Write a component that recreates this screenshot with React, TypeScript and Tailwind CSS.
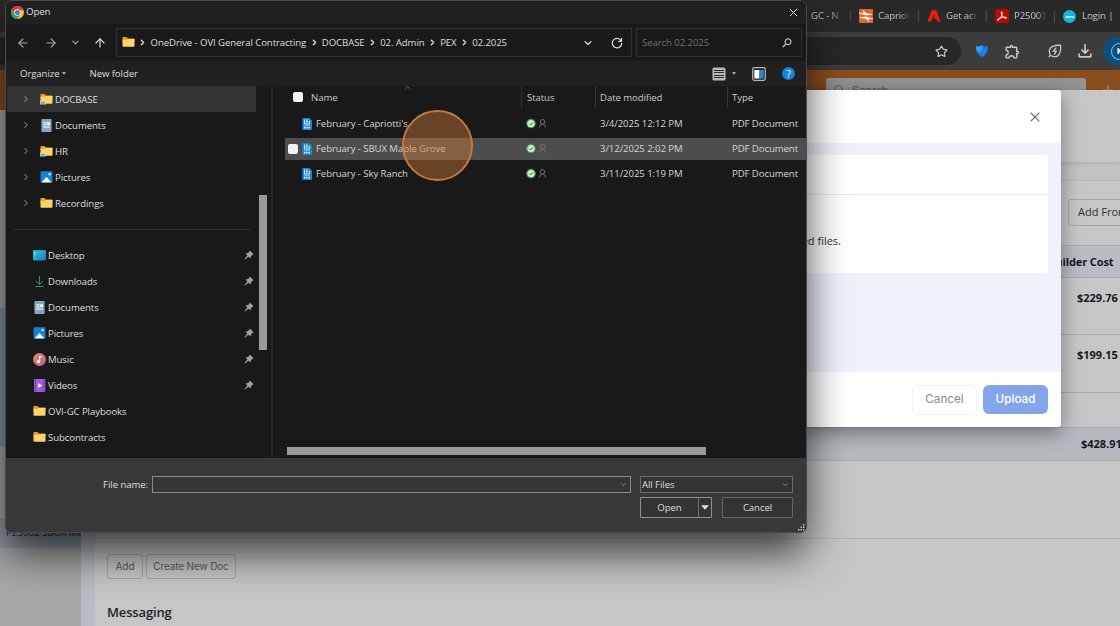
import React from "react";
import clsx from "clsx";
import {
  ArrowLeft,
  ArrowRight,
  ArrowUp,
  ChevronDown,
  ChevronRight,
  ChevronUp,
  Plus,
  Search,
  Star,
  X,
} from "lucide-react";
import { MdOutlineExtension, MdOutlineFileDownload } from "react-icons/md";

const ChromeLogo = () => (
  <svg viewBox="0 0 24 24" className="w-[13px] h-[13px]">
    <circle cx="12" cy="12" r="12" fill="#fbc116" />
    <path d="M12 12 1.6 6A12 12 0 0 1 22.4 6Z" fill="#e33b2e" />
    <path d="M12 6H22.4A12 12 0 0 0 1.6 6L6.8 15Z" fill="#e33b2e" />
    <path d="M6.8 15 1.6 6A12 12 0 0 0 12 24L17.2 15Z" fill="#2da94f" />
    <circle cx="12" cy="12" r="6" fill="#fff" />
    <circle cx="12" cy="12" r="4.7" fill="#3b7ded" />
  </svg>
);

const FolderIcon = ({ linked }: { linked?: boolean }) => (
  <svg viewBox="0 0 13 13" className="w-[13px] h-[13px] shrink-0">
    <path d="M.5 1.800c0-.5.3-.8.8-.8h3.2l1.3 1.400h5.9c.5 0 .8.3.8.8v2H.5Z" fill="#e8a317" />
    <path d="M.5 3.800h4.400l1.100-.9h6.500v7c0 .5-.3.8-.8.8H1.300c-.5 0-.8-.3-.8-.8Z" fill="#fcd566" />
    {linked && (
      <>
        <path d="M0 7.500h4l2 2v2H0Z" fill="#c3d9de" opacity=".9" />
        <path d="M.7 9.800h4.300M2 8.800v2M3.800 8.800v2" stroke="#4f8797" strokeWidth=".7" />
      </>
    )}
  </svg>
);

const DocumentsIcon = () => (
  <svg viewBox="0 0 13 13" className="w-[13px] h-[13px]">
    <rect x="1.4" y="0" width="10.2" height="13" rx="1" fill="#8ba3bd" />
    <path d="M3.2 3.8h3.4M3.2 5.8h3.4M3.2 8h6.6" stroke="#fff" strokeWidth="1" />
    <rect x="7.2" y="3.3" width="2.6" height="2.8" fill="#fff" />
  </svg>
);

const PicturesIcon = () => (
  <svg viewBox="0 0 13 13" className="w-[13px] h-[13px]">
    <rect x=".6" y=".2" width="11.8" height="11.8" rx="1.2" fill="#1684d3" />
    <path d="M1.800 11.300 6 6.600c.3-.4.8-.4 1.100 0l4.200 4.700Z" fill="#fff" />
    <circle cx="9.6" cy="3.2" r="1.1" fill="#fff" />
  </svg>
);

const DesktopIcon = () => (
  <svg viewBox="0 0 13 13" className="w-[13px] h-[13px]">
    <defs>
      <linearGradient id="desk" x1="0" y1="0" x2="1" y2="1">
        <stop offset="0" stopColor="#35d0d6" />
        <stop offset="1" stopColor="#1573c6" />
      </linearGradient>
    </defs>
    <rect x="0" y="1.2" width="13" height="10.2" rx="1" fill="url(#desk)" />
    <path d="M1.7 3v1M1.7 5v1" stroke="#c8f7fa" strokeWidth=".9" />
  </svg>
);

const DownloadsIcon = () => (
  <svg viewBox="0 0 13 13" className="w-[13px] h-[13px]" fill="none" stroke="#23936f" strokeWidth="1">
    <path d="M6.5.8v8.4M3 6l3.5 3.5L10 6M2.2 11.500h8.600" />
  </svg>
);

const MusicIcon = () => (
  <svg viewBox="0 0 13 13" className="w-[13px] h-[13px]">
    <defs>
      <linearGradient id="music" x1="0" y1="0" x2="1" y2="1">
        <stop offset="0" stopColor="#f08a50" />
        <stop offset="1" stopColor="#b55c9c" />
      </linearGradient>
    </defs>
    <circle cx="6.5" cy="6.5" r="6.5" fill="url(#music)" />
    <path d="M6.6 3.2v5.4M6.6 3.4 9 4.3" stroke="#fff" strokeWidth="1.1" />
    <circle cx="5.5" cy="8.6" r="1.6" fill="#fff" />
  </svg>
);

const VideosIcon = () => (
  <svg viewBox="0 0 13 13" className="w-[13px] h-[13px]">
    <rect x="1" y="0" width="11.4" height="13" rx="1" fill="#9a5de0" />
    <path d="M2.3 1v11M11.1 1v11" stroke="#4d2792" strokeWidth="1.2" strokeDasharray="1.3 1.2" />
    <path d="M5 4v5l4-2.5Z" fill="#fff" />
  </svg>
);

const PinIcon = () => (
  <svg viewBox="0 0 10 10" className="w-[10px] h-[10px]">
    <path d="M5.800.4 9.600 4.200 8.200 4.900 6.900 6.200l-.3 2.200L4.500 6.700 1 9.600l-.6-.4L3.300 5.500 1.600 3.400l2.300-.3L5.200 1.900Z" fill="#9aa4a9" />
  </svg>
);

const PdfFileIcon = () => (
  <svg viewBox="0 0 10 12" className="w-[10px] h-[12px]">
    <path d="M1.3 0h5.9L10 2.6V11a1 1 0 0 1-1 1H1.3a1 1 0 0 1-1-1V1a1 1 0 0 1 1-1Z" fill="#1a86d2" />
    <path d="M2.600 1.400v4.600h4.800V2.800M4.900 1v3M3.700 3.900h2.500" stroke="#fff" strokeWidth=".8" fill="none" />
    <path d="M2 7.300h6" stroke="#bfe0f7" strokeWidth=".6" />
    <path d="M2 9.600h1.500M4.200 9.600h1.500M6.500 9.600H8" stroke="#e6f4fd" strokeWidth="1.800" />
  </svg>
);

const StatusIcons = () => (
  <svg viewBox="0 0 22 12" className="w-[22px] h-[12px]" fill="none">
    <circle cx="5" cy="5.600" r="4.2" fill="#cfeed2" stroke="#3d9b50" strokeWidth="1.1" />
    <path d="m3.200 5.600 1.400 1.400 2.400-2.700" stroke="#2c6f3a" strokeWidth="1" />
    <circle cx="16.500" cy="3.800" r="2.300" stroke="#777" strokeWidth=".9" />
    <path d="M13.600 9.500c0-2.200 1.100-3.400 2.900-3.400s2.900 1.200 2.900 3.400" stroke="#777" strokeWidth=".9" />
  </svg>
);

const bookmarks = [
  {
    label: "Capriot",
    icon: (
      <svg viewBox="0 0 14 14" className="w-[14px] h-[14px] shrink-0">
        <rect width="14" height="14" rx="1" fill="#e0662b" />
        <path d="M0 4.200h5.200L4 1.500 7.500 4.600 13 5.300 7.500 6.200ZM14 9.800H8.800l1.200 2.700L6.500 9.400 1 8.700l5.500-.9Z" fill="#fff" stroke="#fff" strokeWidth=".5" />
      </svg>
    ),
  },
  {
    label: "Get acc",
    icon: (
      <svg viewBox="0 0 14 14" className="w-[14px] h-[14px] shrink-0">
        <path d="M4.800 1.200h4.400l4.400 11.400h-3.300L9.200 9.800H6.300l1.200-2.600L7 5.600 4 12.600H.4Z" fill="#ee1c0f" />
      </svg>
    ),
  },
  {
    label: "P25001",
    icon: (
      <svg viewBox="0 0 14 14" className="w-[14px] h-[14px] shrink-0">
        <rect width="14" height="14" rx="2.5" fill="#b10d07" />
        <path
          d="M6.8 2.8c-1 0-.5 2.4.6 4.2 1.2 1.8 3.9 3 4.1 1.9.2-1.2-4.2-.9-6.6.1-2 .9-3 2-2.2 2.3 1.1.4 3.2-3 4-5.1.5-1.5.7-3.4.1-3.400Z"
          fill="none"
          stroke="#fff"
          strokeWidth=".9"
        />
      </svg>
    ),
  },
];

const Bookmark = ({ icon, children }: { icon: React.ReactNode; children: React.ReactNode }) => (
  <div className="flex items-center w-[68px] shrink-0">
    <div className="w-px h-3 bg-[#4a4a4a] mr-2" />
    {icon}
    <span className="ml-[5px] whitespace-nowrap [mask-image:linear-gradient(90deg,#000_70%,transparent)]">{children}</span>
  </div>
);

const BrowserBars = () => (
  <div className="shrink-0">
    <div className="flex items-center h-8 pl-[811px] pt-px bg-[#292929] text-[9.700px] tracking-[-0.150px] text-[#c3c3c3]">
      <span className="w-[39px] shrink-0 whitespace-nowrap [mask-image:linear-gradient(90deg,#000_50%,transparent_80%)]">
        GC - N
      </span>
      {bookmarks.map((b) => (
        <Bookmark key={b.label} icon={b.icon}>
          {b.label}
        </Bookmark>
      ))}
      <div className="w-px h-3 bg-[#4a4a4a] mr-2" />
      <span className="flex items-center justify-center w-[13px] h-[13px] rounded-full bg-[#14b5dd] text-white text-[4px] font-bold">
        xero
      </span>
      <span className="ml-[6px] whitespace-nowrap">Login |</span>
    </div>
    <div className="flex items-center h-[38px] bg-[#3c3c3c] text-[#c9c9c9]">
      <div className="flex items-center justify-end w-[961px] h-7 rounded-r-full bg-[#272727] pr-[13px] shrink-0">
        <Star className="w-[13px] h-[13px]" strokeWidth={2.2} />
      </div>
      <svg viewBox="0 0 12 12" className="w-3 h-3 ml-[15px] shrink-0">
        <path d="M0 1.5C3 1.5 4.5 1 6 0c1.5 1 3 1.5 6 1.5C12 6.5 9.5 10 6 12 2.5 10 0 6.5 0 1.5Z" fill="#1482e6" />
        <path d="M0 1.5C3 1.5 4.5 1 6 0v6L1.3 7.5C.5 5.8 0 3.8 0 1.5Z" fill="#2f9bf5" />
      </svg>
      <MdOutlineExtension className="w-[17px] h-[17px] ml-[16px] shrink-0" />
      <div className="w-px h-3 bg-[#6a6a6a] ml-[12px]" />
      <svg viewBox="0 0 14 14" className="w-[14px] h-[14px] ml-[15px] shrink-0" fill="none" stroke="currentColor" strokeWidth="1.3">
        <path d="M12.6 1.3C7 1 1.3 2.5 1.3 7.5c0 3.2 2.4 5.2 5.3 5.2 5.2 0 6.4-5.6 6-11.4ZM.8 13l1.7-1.7" />
        <path d="M8.3 3.6 5.3 7.2h3L6.3 10.6" />
      </svg>
      <MdOutlineFileDownload className="w-[20px] h-[20px] ml-[13px] shrink-0" />
      <div className="flex items-center w-7 h-7 rounded-full bg-[#0b4f80] ml-[8px] shrink-0">
        <div className="flex items-center justify-center w-[17px] h-[17px] ml-2 rounded-full border border-[#a9c4d6] shrink-0 text-[8px] font-bold text-white">
          K
        </div>
      </div>
    </div>
  </div>
);

const PageButton = ({ className, children }: { className?: string; children: React.ReactNode }) => (
  <div className={clsx("flex items-center border border-[#a3a5a8] rounded-[3px] whitespace-nowrap shrink-0", className)}>
    {children}
  </div>
);

const CostRow = ({ className, children }: { className?: string; children?: React.ReactNode }) => (
  <div className={clsx("shrink-0 border-b border-[#a9adb1] font-bold text-[11px] text-[#15181d] whitespace-nowrap", className)}>
    {children}
  </div>
);

const ProjectPage = () => (
  <div className="flex flex-1 min-h-0">
    <div className="flex flex-col w-[81px] shrink-0 bg-[#a6a8a7]">
      <div className="h-10 bg-[#8a4e1e]" />
      <div className="h-[198px]" />
      <div className="h-[139px] bg-[#8796a2]" />
      <div className="h-[71px]" />
      <div className="flex items-center h-[30px] bg-[#8f9ba3] pl-[6px] text-[9.800px] tracking-[-0.050px] text-[#2a3038] whitespace-nowrap">
        P25002 SBUX Ma
      </div>
    </div>
    <div className="flex flex-col flex-1 min-w-0 overflow-hidden">
      <div className="flex h-5 bg-[#8a4e1e] pl-[745px] pt-2 overflow-hidden shrink-0">
        <div className="flex items-center w-[260px] h-6 rounded-t-[3px] bg-[#929292] pl-[7px] shrink-0 text-[#4e4e4e] text-[11px] font-['Liberation_Sans'] tracking-[0.2px]">
          <Search className="w-3 h-3 mr-[7px]" strokeWidth={1.5} />
          Search
        </div>
        <Plus className="w-4 h-4 ml-[14px] mt-1 text-[#b9926f] shrink-0" strokeWidth={1.5} />
      </div>
      <div className="flex flex-col flex-1 min-h-0 border-l-[14px] border-[#b7bdc4] bg-[#c6c6c6]">
        <div className="h-[72px] shrink-0 bg-[#c6c6c6] shadow-[0_1px_4px_rgba(0,0,0,0.25)]" />
        <div className="h-[19px] shrink-0 border-b border-[#b5b5b5] bg-[#c0c0c0]/50" />
        <div className="h-[64px] shrink-0 pl-[973px] pt-[18px]">
          <PageButton className="h-[27px] w-32 pl-[9px] border-[#9da3a9] text-[11px] text-[#2b2f35]">Add From</PageButton>
        </div>
        <CostRow className="h-[33px] bg-[#b7bdc3] border-t pl-[953px] leading-[32px] tracking-[-0.100px]">Builder Cost</CostRow>
        <CostRow className="h-[57px] pl-[982px] leading-[39px]">$229.76</CostRow>
        <CostRow className="h-[58px] pl-[982px] leading-[40px]">$199.15</CostRow>
        <CostRow className="h-[35px]" />
        <CostRow className="h-[33px] bg-[#b4babf] pl-[986px] leading-[32px]">$428.91</CostRow>
        <div className="h-[78px] shrink-0 border-b border-[#b3b3b3]" />
        <div className="flex gap-[3px] pt-[15px] pl-3 text-[10px] text-[#5a5a5a] font-['Inter']">
          <PageButton className="h-[25px] w-[36px] justify-center">Add</PageButton>
          <PageButton className="h-[25px] w-[90px] justify-center tracking-[-0.150px]">Create New Doc</PageButton>
        </div>
        <h2 className="mt-[23px] pl-3 text-[13px] leading-5 font-semibold tracking-[-0.150px] text-[#1b1f24]">Messaging</h2>
      </div>
    </div>
  </div>
);

const UploadModal = () => (
  <div className="absolute left-[500px] top-[90px] w-[561px] h-[337px] flex flex-col rounded-[3px] overflow-hidden bg-white shadow-[0_6px_20px_rgba(0,0,0,0.4)] font-['Inter']">
    <div className="flex items-center justify-end h-[53px] shrink-0 pr-[18px]">
      <X className="w-[16px] h-[16px] text-[#6b7280]" strokeWidth={1.7} />
    </div>
    <div className="flex-1 bg-[#eff2fb] px-[13px] pt-3">
      <div className="h-[118px] rounded-[3px] bg-white">
        <div className="h-10 border-b border-[#ececec]" />
        <div className="pt-[37px] pr-[207px] text-right text-[11px] leading-[18px] text-[#333] font-['Open_Sans']">
          No uploaded files.
        </div>
      </div>
    </div>
    <div className="flex items-center justify-end gap-[6px] h-[55px] shrink-0 pr-[13px] text-[11.700px]">
      <div className="flex items-center justify-center w-[65px] h-[30px] rounded-[6px] border border-[#f1f1f3] text-[#8c8c8c]">
        Cancel
      </div>
      <div className="flex items-center justify-center w-[65px] h-[29px] rounded-[6px] bg-[#82a6e9] text-white font-medium">
        Upload
      </div>
    </div>
  </div>
);

const crumbs = ["OneDrive - OVI General Contracting", "DOCBASE", "02. Admin", "PEX", "02.2025"];

const tree = [
  { name: "DOCBASE", icon: <FolderIcon linked />, active: true },
  { name: "Documents", icon: <DocumentsIcon /> },
  { name: "HR", icon: <FolderIcon linked /> },
  { name: "Pictures", icon: <PicturesIcon /> },
  { name: "Recordings", icon: <FolderIcon /> },
];

const quickAccess = [
  { name: "Desktop", icon: <DesktopIcon />, pinned: true },
  { name: "Downloads", icon: <DownloadsIcon />, pinned: true },
  { name: "Documents", icon: <DocumentsIcon />, pinned: true },
  { name: "Pictures", icon: <PicturesIcon />, pinned: true },
  { name: "Music", icon: <MusicIcon />, pinned: true },
  { name: "Videos", icon: <VideosIcon />, pinned: true },
  { name: "OVI-GC Playbooks", icon: <FolderIcon /> },
  { name: "Subcontracts", icon: <FolderIcon /> },
];

const files = [
  { name: "February - Capriotti's", date: "3/4/2025 12:12 PM" },
  { name: "February - SBUX Maple Grove", date: "3/12/2025 2:02 PM", hovered: true },
  { name: "February - Sky Ranch", date: "3/11/2025 1:19 PM" },
];

const NavPane = () => (
  <div className="flex w-[267px] shrink-0 border-r-2 border-[#262626]">
    <div className="w-[250px] pl-px shrink-0">
      {tree.map((item) => (
        <div key={item.name} className={clsx("flex items-center h-[26px] pl-[14px]", item.active && "bg-[#333]")}>
          <ChevronRight className="w-[10px] h-[10px] text-[#8d8d8d] mr-[9px]" strokeWidth={2.5} />
          {item.icon}
          <span className="ml-[2px] pt-[2px]">{item.name}</span>
        </div>
      ))}
      <div className="flex items-center h-[26px] pl-[7px] pr-[6px]">
        <div className="w-full h-px bg-[#333]" />
      </div>
      {quickAccess.map((item) => (
        <div key={item.name} className="flex items-center h-[26px] pl-[26px] pr-[2px]">
          {item.icon}
          <span className="ml-[2px] pt-[2px] mr-auto">{item.name}</span>
          {item.pinned && <PinIcon />}
        </div>
      ))}
    </div>
    <div className="ml-[3px] mt-[109px] w-2 h-[155px] bg-[#999]" />
  </div>
);

const FileList = () => (
  <div className="flex flex-col flex-1 min-w-0 pl-3">
    <div className="relative flex h-[22px] leading-[23px] text-[#c8c8c8]">
      <div className="flex items-center w-[237px] pl-2 border-r border-[#333]">
        <div className="w-[10px] h-[10px] rounded-[2px] bg-[#f3f3f3] mr-[8px]" />
        Name
      </div>
      <div className="w-[74px] pl-[5px] border-r border-[#333]">Status</div>
      <div className="w-[132px] pl-[4px] border-r border-[#333]">Date modified</div>
      <div className="pl-[4px]">Type</div>
      <ChevronUp className="absolute left-[118px] -top-[3px] w-[9px] h-[9px] text-[#999]" strokeWidth={1.5} />
    </div>
    <div className="flex flex-col gap-[3.300px] pt-[4.500px] text-[#d6d6d6]">
      {files.map((file) => (
        <div key={file.name} className={clsx("flex items-center h-[22px]", file.hovered && "bg-[#4d4d4d]")}>
          <div className={clsx("w-[10px] h-[10px] rounded-[2px] ml-[3px] mr-1", file.hovered && "bg-[#f3f3f3]")} />
          <PdfFileIcon />
          <span className="ml-[4px] pt-px w-[210px]">{file.name}</span>
          <div className="w-[74px]">
            <StatusIcons />
          </div>
          <span className="w-[132px] pt-px">{file.date}</span>
          <span className="pt-px">PDF Document</span>
        </div>
      ))}
    </div>
    <div className="mt-auto mb-[3px] ml-[2px] w-[419px] h-2 bg-[#999]" />
  </div>
);

const OpenDialog = () => (
  <div className="absolute left-[5px] top-0 w-[802px] h-[533px] flex flex-col overflow-hidden rounded-[7px] border border-[#4b4b4b] bg-[#191919] text-[9.600px] tracking-[-0.080px] text-[#dedede] whitespace-nowrap shadow-[0_20px_40px_rgba(0,0,0,0.7)]">
    <div className="flex items-center h-[23px] shrink-0 bg-[#202020] pl-[5px] pr-[6px]">
      <ChromeLogo />
      <span className="ml-[2px] mr-auto text-[9.800px] tracking-[-0.200px]">Open</span>
      <X className="w-[13px] h-[13px]" strokeWidth={1.8} />
    </div>
    <div className="flex items-center h-[37px] shrink-0 pl-[10px] pr-1">
      <ArrowLeft className="w-[14px] h-[14px] text-[#a5a5a5]" />
      <ArrowRight className="w-[14px] h-[14px] ml-[14px] text-[#a5a5a5]" />
      <ChevronDown className="w-[11px] h-[11px] ml-[12px] text-[#a5a5a5]" strokeWidth={2.5} />
      <ArrowUp className="w-[14px] h-[14px] ml-[12px]" />
      <div className="flex items-center w-[516px] h-[29px] ml-[9px] pl-[5px] border border-[#303030]">
        <FolderIcon />
        {crumbs.map((crumb) => (
          <React.Fragment key={crumb}>
            <ChevronRight className="w-[9px] h-[9px] mx-[3.300px]" strokeWidth={3.5} />
            <span className="pt-px">{crumb}</span>
          </React.Fragment>
        ))}
        <ChevronDown className="w-[12px] h-[12px] ml-auto" strokeWidth={2.2} />
        <svg viewBox="0 0 12 12" className="w-3 h-3 ml-[17px] mr-2" fill="none" stroke="currentColor" strokeWidth="1.2">
          <path d="M10.3 4.2A4.7 4.7 0 1 0 10.7 6M10.5 1v3.3H7.3" />
        </svg>
      </div>
      <div className="flex items-center justify-between w-[166px] h-[29px] ml-[4px] pl-[5px] pr-[9px] border border-[#303030] text-[#6f6f6f]">
        <span className="pt-px">Search 02.2025</span>
        <svg viewBox="0 0 10 10" className="w-[10px] h-[10px]" fill="none" stroke="#b5b5b5">
          <circle cx="6" cy="3.8" r="2.9" strokeWidth="1.2" />
          <path d="M4 6 .7 9.3" strokeWidth="1.5" />
        </svg>
      </div>
    </div>
    <div className="flex items-center h-[25px] shrink-0 bg-[#202020] pl-[14px] pr-[11px]">
      <span className="pt-[2px]">Organize</span>
      <svg viewBox="0 0 4 3" className="w-1 h-[3px] ml-[3px]">
        <path d="M0 .3h4L2 2.6Z" fill="#ccc" />
      </svg>
      <span className="ml-[23px] pt-[2px] mr-auto">New folder</span>
      <svg viewBox="0 0 14 14" className="w-[14px] h-[14px]">
        <rect x=".5" y=".5" width="13" height="13" rx="1.5" fill="#b9b9b9" />
        <path d="M2 3.500h10M2 5.500h10M2 8.500h10M2 10.500h10" stroke="#2b2b2b" strokeWidth="1" />
      </svg>
      <svg viewBox="0 0 4 3" className="w-1 h-[3px] ml-[6px]">
        <path d="M0 .3h4L2 2.6Z" fill="#ccc" />
      </svg>
      <svg viewBox="0 0 14 14" className="w-[14px] h-[14px] ml-[16px]">
        <rect x=".7" y=".7" width="12.6" height="12.6" rx="1.5" fill="#202020" stroke="#b9b9b9" strokeWidth="1.2" />
        <rect x="2.3" y="3" width="5.2" height="8.5" fill="#fff" />
        <rect x="7.5" y="3" width="4.3" height="8.5" fill="#1c8ad6" />
      </svg>
      <div className="flex items-center justify-center w-[13px] h-[13px] ml-4 rounded-full bg-[#1583d7] text-white text-[10px] leading-none">
        ?
      </div>
    </div>
    <div className="flex flex-1 min-h-0">
      <NavPane />
      <FileList />
    </div>
    <div className="relative flex flex-col h-[74px] shrink-0 bg-[#383838] pt-[18px]">
      <div className="flex items-center">
        <span className="w-[146px] pt-px pr-[4px] text-right">File name:</span>
        <div className="flex items-center justify-end w-[479px] h-[17px] pr-[2px] border border-[#8b8b8b] bg-[#363636]">
          <ChevronDown className="w-[9px] h-[9px] text-[#a8a8a8]" strokeWidth={1.8} />
        </div>
        <div className="flex items-center justify-between w-[153px] h-[17px] ml-[9px] pl-px pr-[2px] border border-[#6a6a6a] bg-[#333]">
          <span className="pt-px">All Files</span>
          <ChevronDown className="w-[9px] h-[9px] text-[#a8a8a8]" strokeWidth={1.8} />
        </div>
      </div>
      <div className="flex mt-[4px] pl-[634px]">
        <div className="flex w-[72px] h-[21px] border border-[#8f8f8f] rounded-[1px] bg-[#333]">
          <div className="flex items-center justify-center flex-1 pt-px">Open</div>
          <div className="flex items-center justify-center w-[13px] border-l border-[#6f6f6f]">
            <svg viewBox="0 0 8 5" className="w-2 h-[5px]">
              <path d="M0 .3h8L4 4.7Z" fill="#ddd" />
            </svg>
          </div>
        </div>
        <div className="flex items-center justify-center w-[71px] h-[21px] ml-[10px] pt-px border border-[#666] rounded-[1px] bg-[#333]">
          Cancel
        </div>
      </div>
      <svg viewBox="0 0 7 7" className="absolute right-px bottom-px w-[7px] h-[7px]" fill="#c4c4c4">
        <path d="M5 0h1.5v1.5H5ZM5 2.5h1.5V4H5ZM5 5h1.5v1.5H5ZM2.5 2.5H4V4H2.5ZM2.5 5H4v1.5H2.5ZM0 5h1.5v1.5H0Z" />
      </svg>
    </div>
  </div>
);

export default function App() {
  return (
    <div className="relative w-[1120px] h-[626px] overflow-hidden flex flex-col bg-[#c6c6c6] font-['Open_Sans',sans-serif]">
      <BrowserBars />
      <ProjectPage />
      <UploadModal />
      <OpenDialog />
      {/* click marker */}
      <div className="absolute left-[401.500px] top-[109.500px] w-[71px] h-[71px] rounded-full border-[2.500px] border-[#c07a40] bg-[rgba(205,120,56,0.45)]" />
    </div>
  );
}
